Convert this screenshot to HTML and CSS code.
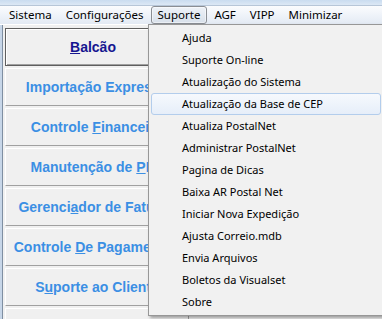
FILE: index.html
```html
<!DOCTYPE html>
<html>
<head>
<meta charset="utf-8">
<link rel="stylesheet" href="styles.css">
</head>
<body>
<div class="win">
  <div class="frame-top"></div>
  <div class="menubar">
    <span class="mi">Sistema</span>
    <span class="mi">Configurações</span>
    <span class="mi open">Suporte</span>
    <span class="mi">AGF</span>
    <span class="mi">VIPP</span>
    <span class="mi">Minimizar</span>
  </div>
  <div class="client">
    <div class="btns">
      <div class="btn default"><span><u>B</u>alcão</span></div>
      <div class="btn"><span>Importação Expresso</span></div>
      <div class="btn"><span>Controle <u>F</u>inanceiro</span></div>
      <div class="btn"><span>Manutenção de <u>P</u>LP</span></div>
      <div class="btn"><span>Gerenci<u>a</u>dor de Faturas</span></div>
      <div class="btn"><span>Controle <u>D</u>e Pagamentos</span></div>
      <div class="btn"><span>S<u>u</u>porte ao Cliente</span></div>
      <div class="btn"></div>
    </div>
  </div>
  <div class="dropdown">
    <div class="item">Ajuda</div>
    <div class="item">Suporte On-line</div>
    <div class="item">Atualização do Sistema</div>
    <div class="item hot">Atualização da Base de CEP</div>
    <div class="item">Atualiza PostalNet</div>
    <div class="item">Administrar PostalNet</div>
    <div class="item">Pagina de Dicas</div>
    <div class="item">Baixa AR Postal Net</div>
    <div class="item">Iniciar Nova Expedição</div>
    <div class="item">Ajusta Correio.mdb</div>
    <div class="item">Envia Arquivos</div>
    <div class="item">Boletos da Visualset</div>
    <div class="item">Sobre</div>
  </div>
</div>
</body>
</html>
```

FILE: styles.css
```css
html, body {
  margin: 0;
  padding: 0;
}
body {
  background: #f0f0f0;
}
.win {
  position: relative;
  width: 382px;
  height: 319px;
  overflow: hidden;
  background: #f0f0f0;
  font-family: "Noto Sans", "Open Sans", sans-serif;
}
.frame-top {
  height: 5px;
  background: linear-gradient(#cadcf0, #dce8f5);
}
.menubar {
  height: 18px;
  display: flex;
  align-items: center;
  padding-left: 2px;
  border-top: 1px solid #b7c6d8;
  background: linear-gradient(#fbfcfe, #e3eaf4);
  font-size: 11.5px;
  color: #000;
}
.mi {
  height: 16px;
  line-height: 16px;
  padding: 0 6px;
  border: 1px solid transparent;
  border-radius: 3px;
}
.mi.open {
  border-color: #8a8e94;
  background: linear-gradient(#eef2f8, #d8e0ea);
  box-shadow: inset 0 0 0 1px rgba(255,255,255,0.5);
}
.client {
  border-top: 1px solid #ffffff;
  padding: 3px 0 0 5px;
  height: 295px;
  background: linear-gradient(to right, #c7d6e8 0, #c7d6e8 2px, #7f8fa2 2px, #7f8fa2 3px, #f0f0f0 3px);
}
.btns {
  display: flex;
  flex-direction: column;
  gap: 2px;
  width: 184px;
}
.btn {
  box-sizing: border-box;
  height: 38px;
  flex: none;
  display: flex;
  align-items: center;
  justify-content: center;
  border-top: 1px solid #ffffff;
  border-left: 1px solid #ffffff;
  border-bottom: 1px solid #a0a0a0;
  border-right: 1px solid #a0a0a0;
  background: #f0f0f0;
  font-family: "Liberation Sans", Arial, sans-serif;
  font-weight: bold;
  font-size: 14px;
  color: #3b8fe4;
  white-space: nowrap;
}
.btn.default {
  border: 1px solid #5f5f5f;
  box-shadow: inset 1px 1px 0 #ffffff, inset -1px -1px 0 #a0a0a0;
  color: #161690;
  padding-right: 8px;
}
.dropdown {
  position: absolute;
  left: 148px;
  top: 24px;
  width: 230px;
  padding: 2px;
  border: 1px solid #979797;
  background: #f1f1f1;
  box-shadow: 2px 2px 3px rgba(0,0,0,0.35);
  font-size: 11px;
  color: #000;
}
.item {
  height: 20px;
  line-height: 20px;
  padding-left: 30px;
  border: 1px solid transparent;
  border-radius: 3px;
  white-space: nowrap;
}
.item.hot {
  border-color: #b3cdec;
  background: linear-gradient(#f6f9fd, #e6eef9);
}
```
